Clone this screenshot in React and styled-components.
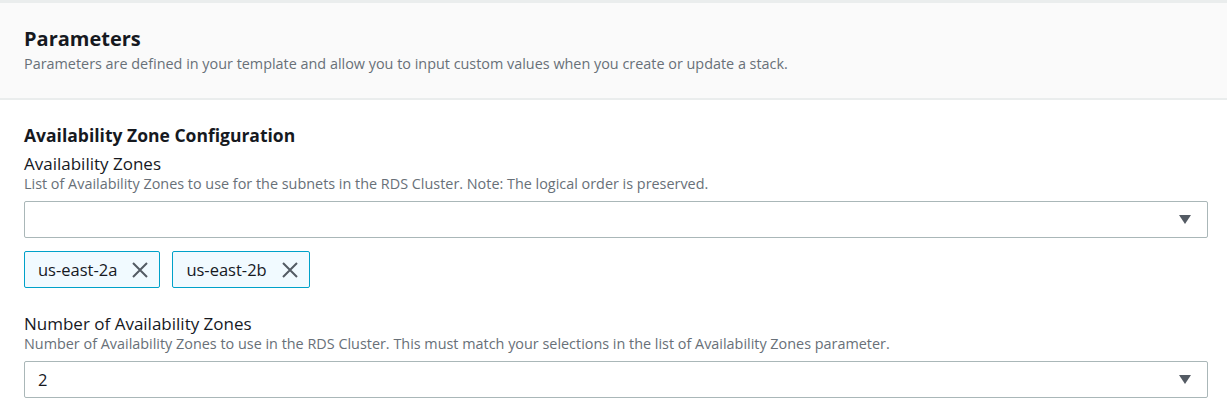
import React from "react";
import styled, { createGlobalStyle } from "styled-components";

const Global = createGlobalStyle`
  html, body { margin: 0; padding: 0; background: #ffffff; }
  body { font-family: "Open Sans", "Noto Sans", sans-serif; color: #16191f; }
  * { box-sizing: border-box; }
`;

const Page = styled.div`
  width: 1227px;
  border-top: 3px solid #eaeded;
`;

const Header = styled.div`
  background: #fafafa;
  border-bottom: 2px solid #eaeded;
  padding: 24px 19px 0 24px;
  height: 97px;
`;

const Title = styled.h2`
  margin: 0;
  font-size: 20px;
  line-height: 24px;
  font-weight: 700;
  color: #16191f;
`;

const Subtitle = styled.p`
  margin: 4px 0 0;
  font-size: 14.4px;
  line-height: 18px;
  color: #687078;
`;

const Body = styled.div`
  padding: 24px 19px 0 24px;
`;

const SectionTitle = styled.h3`
  margin: 0;
  font-size: 17.5px;
  line-height: 22px;
  font-weight: 700;
  color: #16191f;
`;

const Field = styled.div`
  margin-top: ${(p) => p.$top}px;
  display: flex;
  flex-direction: column;
`;

const Label = styled.label`
  font-size: 17px;
  line-height: 22px;
  color: #16191f;
`;

const Hint = styled.span`
  font-size: 14.4px;
  line-height: 18px;
  color: #687078;
`;

const SelectBox = styled.div`
  margin-top: 8px;
  height: 37px;
  border: 1px solid #aab7b8;
  border-radius: 2px;
  background: #ffffff;
  display: flex;
  align-items: center;
  justify-content: space-between;
  padding: 0 16px 0 13px;
  font-size: 16.5px;
  color: #16191f;
`;

const Caret = styled.svg`
  width: 12px;
  height: 9px;
  flex: none;
`;

const Tokens = styled.div`
  margin-top: 13px;
  display: flex;
  gap: 12px;
`;

const Token = styled.div`
  height: 37px;
  display: flex;
  align-items: center;
  gap: 13px;
  padding: 0 9px 0 13px;
  background: #f1faff;
  border: 1px solid #00a1c9;
  border-radius: 2px;
  font-size: 16.5px;
  color: #16191f;
`;

const Dismiss = styled.svg`
  width: 20px;
  height: 20px;
  flex: none;
`;

const DownCaret = () => (
  <Caret viewBox="0 0 12 9">
    <path d="M0 0 H12 L6 9 Z" fill="#545b64" />
  </Caret>
);

const XIcon = () => (
  <Dismiss viewBox="0 0 20 20">
    <path d="M3 3 L17 17 M17 3 L3 17" stroke="#545b64" strokeWidth="2" fill="none" />
  </Dismiss>
);

export default function App() {
  return (
    <Page>
      <Global />
      <Header>
        <Title>Parameters</Title>
        <Subtitle>
          Parameters are defined in your template and allow you to input custom values when you create or update a stack.
        </Subtitle>
      </Header>
      <Body>
        <SectionTitle>Availability Zone Configuration</SectionTitle>
        <Field $top={7}>
          <Label>Availability Zones</Label>
          <Hint>List of Availability Zones to use for the subnets in the RDS Cluster. Note: The logical order is preserved.</Hint>
          <SelectBox>
            <span></span>
            <DownCaret />
          </SelectBox>
          <Tokens>
            <Token>
              us-east-2a
              <XIcon />
            </Token>
            <Token>
              us-east-2b
              <XIcon />
            </Token>
          </Tokens>
        </Field>
        <Field $top={25}>
          <Label>Number of Availability Zones</Label>
          <Hint>Number of Availability Zones to use in the RDS Cluster. This must match your selections in the list of Availability Zones parameter.</Hint>
          <SelectBox>
            <span>2</span>
            <DownCaret />
          </SelectBox>
        </Field>
      </Body>
    </Page>
  );
}
